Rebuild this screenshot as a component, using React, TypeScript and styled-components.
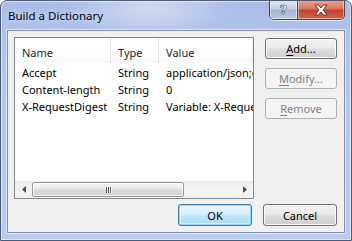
import styled, { createGlobalStyle, css } from "styled-components";

const GlobalStyle = createGlobalStyle`
  html, body {
    margin: 0;
    padding: 0;
    background: #ffffff;
  }
  body {
    font-family: "Noto Sans", "Open Sans", sans-serif;
    font-size: 11px;
  }
`;

const Window = styled.div`
  width: 352px;
  height: 241px;
  box-sizing: border-box;
  display: flex;
  flex-direction: column;
  border: 1px solid #4b5b78;
  border-radius: 7px 7px 0 0;
  background:
    radial-gradient(ellipse 120px 40px at 150px 8px, rgba(255, 255, 255, 0.45), rgba(255, 255, 255, 0) 70%),
    linear-gradient(180deg, #aabde8 0%, #b3c6ee 30%, #b8caf0 100%);
  box-shadow: inset 0 0 0 1px rgba(255, 255, 255, 0.55);
  overflow: hidden;
`;

const TitleBar = styled.div`
  height: 29px;
  display: flex;
  align-items: flex-start;
  justify-content: space-between;
  padding-left: 7px;
`;

const Title = styled.div`
  margin-top: 7px;
  color: #000;
  font-size: 11.5px;
  line-height: 16px;
  text-shadow: 0 0 6px rgba(255, 255, 255, 0.9);
`;

const CaptionButtons = styled.div`
  display: flex;
  margin-right: 6px;
  margin-top: -1px;
  border: 1px solid #3d4a63;
  border-top: none;
  border-radius: 0 0 5px 5px;
  overflow: hidden;
  box-shadow: 0 1px 0 rgba(255, 255, 255, 0.6);
`;

const CaptionButton = styled.div<{ $close?: boolean }>`
  height: 19px;
  display: flex;
  align-items: center;
  justify-content: center;
  box-shadow: inset 0 0 0 1px rgba(255, 255, 255, 0.45);
  ${(p) =>
    p.$close
      ? css`
          width: 46px;
          background: linear-gradient(180deg, #e8a596 0%, #d67a66 45%, #c2422c 55%, #d0654c 100%);
          border-left: 1px solid #3d4a63;
        `
      : css`
          width: 27px;
          background: linear-gradient(180deg, #dfe6f2 0%, #c5d0e4 45%, #a9b7d1 55%, #bcc9e0 100%);
        `}
`;

const HelpGlyph = styled.span`
  font-family: "DejaVu Sans", sans-serif;
  font-weight: bold;
  font-size: 13px;
  color: #fff;
  line-height: 1;
  -webkit-text-stroke: 0.6px #44506a;
`;

const Client = styled.div`
  flex: 1;
  margin: 0 6px 7px 6px;
  background: #f0f0f0;
  border: 1px solid #7e8ea9;
  box-shadow: 0 0 0 1px rgba(255, 255, 255, 0.6);
  display: grid;
  grid-template-columns: 240px 72px;
  grid-template-rows: 162px 22px;
  column-gap: 11px;
  row-gap: 5px;
  padding: 6px 0 0 6px;
`;

const ListBox = styled.div`
  border: 1px solid #828790;
  background: #fff;
  display: flex;
  flex-direction: column;
  overflow: hidden;
`;

const HeaderRow = styled.div`
  height: 25px;
  display: grid;
  grid-template-columns: 96px 48px 1fr;
  background: linear-gradient(180deg, #ffffff 0%, #ffffff 60%, #f7f8fa 100%);
`;

const HeaderCell = styled.div`
  padding: 3px 0 0 7px;
  display: flex;
  align-items: center;
  color: #1e1e1e;
  border-right: 1px solid #e3e5e8;
  white-space: nowrap;
  overflow: hidden;
`;

const Rows = styled.div`
  flex: 1;
  padding-top: 1px;
`;

const Row = styled.div`
  height: 17px;
  display: grid;
  grid-template-columns: 96px 48px 1fr;
  align-items: center;
`;

const Cell = styled.div`
  padding-left: 7px;
  white-space: nowrap;
  overflow: hidden;
  color: #000;
  line-height: 17px;
`;

const HScroll = styled.div`
  height: 17px;
  display: flex;
  align-items: stretch;
  background: linear-gradient(180deg, #e8e8e8 0%, #f3f3f3 30%, #f3f3f3 100%);
`;

const ScrollArrow = styled.div`
  width: 17px;
  display: flex;
  align-items: center;
  justify-content: center;
`;

const Track = styled.div`
  flex: 1;
  display: flex;
  align-items: stretch;
  padding: 1px 0;
`;

const Thumb = styled.div`
  width: 152px;
  box-sizing: border-box;
  border: 1px solid #979797;
  border-radius: 2px;
  background: linear-gradient(180deg, #f4f4f4 0%, #e9e9e9 45%, #d9d9d9 55%, #d3d3d3 100%);
  box-shadow: inset 0 0 0 1px rgba(255, 255, 255, 0.7);
  display: flex;
  align-items: center;
  justify-content: center;
  gap: 1px;
`;

const Grip = styled.span`
  width: 1px;
  height: 6px;
  background: #555;
  box-shadow: 1px 0 0 #fff;
`;

const SideButtons = styled.div`
  display: flex;
  flex-direction: column;
  gap: 9px;
  padding-top: 1px;
`;

const Button = styled.div<{ $disabled?: boolean; $default?: boolean }>`
  height: 21px;
  box-sizing: border-box;
  border-radius: 3px;
  display: flex;
  align-items: center;
  justify-content: center;
  font-size: 11px;
  white-space: nowrap;
  color: ${(p) => (p.$disabled ? "#838383" : "#000")};
  border: 1px solid ${(p) => (p.$disabled ? "#adb2b5" : p.$default ? "#3c7fb1" : "#707070")};
  background: ${(p) =>
    p.$disabled
      ? "#f4f4f4"
      : p.$default
      ? "linear-gradient(180deg, #eaf6fd 0%, #d9f0fc 45%, #bee6fd 55%, #a7d9f5 100%)"
      : "linear-gradient(180deg, #f2f2f2 0%, #ebebeb 45%, #dddddd 55%, #cfcfcf 100%)"};
  box-shadow: ${(p) =>
    p.$default
      ? "inset 0 0 0 1px #8fd3f2, inset 0 0 0 2px rgba(255,255,255,0.5)"
      : p.$disabled
      ? "none"
      : "inset 0 0 0 1px rgba(255,255,255,0.8)"};
  u {
    text-decoration: underline;
    text-underline-offset: 2px;
  }
`;

const Footer = styled.div`
  grid-column: 1 / span 2;
  display: flex;
  justify-content: flex-end;
  gap: 11px;
  & > * {
    width: 74px;
    height: 22px;
  }
`;

const rows = [
  ["Accept", "String", "application/json;odata=verbose"],
  ["Content-length", "String", "0"],
  ["X-RequestDigest", "String", "Variable: X-RequestDigest"],
];

const App = () => {
  return (
    <>
      <GlobalStyle />
      <Window>
        <TitleBar>
          <Title>Build a Dictionary</Title>
          <CaptionButtons>
            <CaptionButton>
              <HelpGlyph>?</HelpGlyph>
            </CaptionButton>
            <CaptionButton $close>
              <svg width="14" height="12" viewBox="0 0 14 12">
                <path
                  d="M1 1 H4.5 L7 4 L9.5 1 H13 L9 6 L13 11 H9.5 L7 8 L4.5 11 H1 L5 6 Z"
                  fill="#fff"
                  stroke="#5a2a22"
                  strokeWidth="0.9"
                  strokeLinejoin="round"
                />
              </svg>
            </CaptionButton>
          </CaptionButtons>
        </TitleBar>
        <Client>
          <ListBox>
            <HeaderRow>
              <HeaderCell>Name</HeaderCell>
              <HeaderCell>Type</HeaderCell>
              <HeaderCell>Value</HeaderCell>
            </HeaderRow>
            <Rows>
              {rows.map((r) => (
                <Row key={r[0]}>
                  <Cell>{r[0]}</Cell>
                  <Cell>{r[1]}</Cell>
                  <Cell>{r[2]}</Cell>
                </Row>
              ))}
            </Rows>
            <HScroll>
              <ScrollArrow>
                <svg width="4" height="7" viewBox="0 0 4 7">
                  <path d="M4 0 L0 3.5 L4 7 Z" fill="#4d4d4d" />
                </svg>
              </ScrollArrow>
              <Track>
                <Thumb>
                  <Grip />
                  <Grip />
                  <Grip />
                </Thumb>
              </Track>
              <ScrollArrow>
                <svg width="4" height="7" viewBox="0 0 4 7">
                  <path d="M0 0 L4 3.5 L0 7 Z" fill="#4d4d4d" />
                </svg>
              </ScrollArrow>
            </HScroll>
          </ListBox>
          <SideButtons>
            <Button>
              <span>
                <u>A</u>dd...
              </span>
            </Button>
            <Button $disabled>
              <span>
                <u>M</u>odify...
              </span>
            </Button>
            <Button $disabled>
              <span>
                <u>R</u>emove
              </span>
            </Button>
          </SideButtons>
          <Footer>
            <Button $default>OK</Button>
            <Button>Cancel</Button>
          </Footer>
        </Client>
      </Window>
    </>
  );
};

export default App;
